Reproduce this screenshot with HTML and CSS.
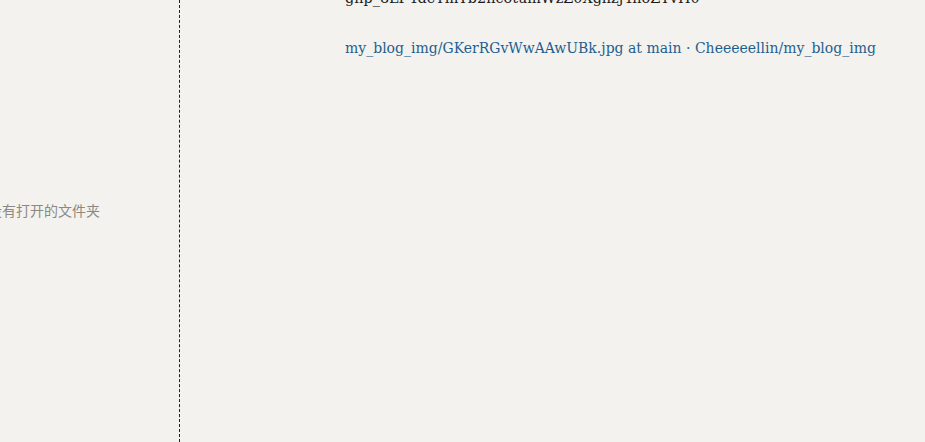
FILE: index.html
```html
<!DOCTYPE html>
<html lang="zh">
<head>
<meta charset="utf-8">
<link rel="stylesheet" href="styles.css">
</head>
<body>
<div class="app">
  <aside class="sidebar">
    <div class="empty">没有打开的文件夹</div>
  </aside>
  <main class="editor">
    <div class="doc">
      <p class="token">ghp_8LP4deYmYb2ncotumWzZ0Xghzj4noZYvH0</p>
      <p><a class="link" href="#">my_blog_img/GKerRGvWwAAwUBk.jpg at main · Cheeeeellin/my_blog_img</a></p>
    </div>
  </main>
</div>
</body>
</html>
```

FILE: styles.css
```css
html, body {
  margin: 0;
  height: 100%;
  background: #f3f2ee;
  overflow: hidden;
}
.app {
  display: flex;
  height: 100%;
}
.sidebar {
  width: 179px;
  flex: none;
  border-right: 1px dashed #222;
  display: flex;
  align-items: center;
  justify-content: flex-end;
  overflow: hidden;
}
.empty {
  font-family: "Noto Sans CJK SC", sans-serif;
  font-size: 14px;
  color: #8c8884;
  white-space: nowrap;
  margin-right: 79px;
  margin-bottom: 22px;
}
.editor {
  flex: 1;
  padding-left: 165px;
  overflow: hidden;
}
.doc {
  margin-top: -14px;
  font-family: "DejaVu Serif", serif;
  font-size: 14px;
  line-height: 25px;
  color: #1a1a1a;
}
.doc p {
  margin: 0 0 25px;
  white-space: nowrap;
}
.token {
  font-size: 14.4px;
}
.link {
  color: #1f5f8f;
  text-decoration: none;
}
```
